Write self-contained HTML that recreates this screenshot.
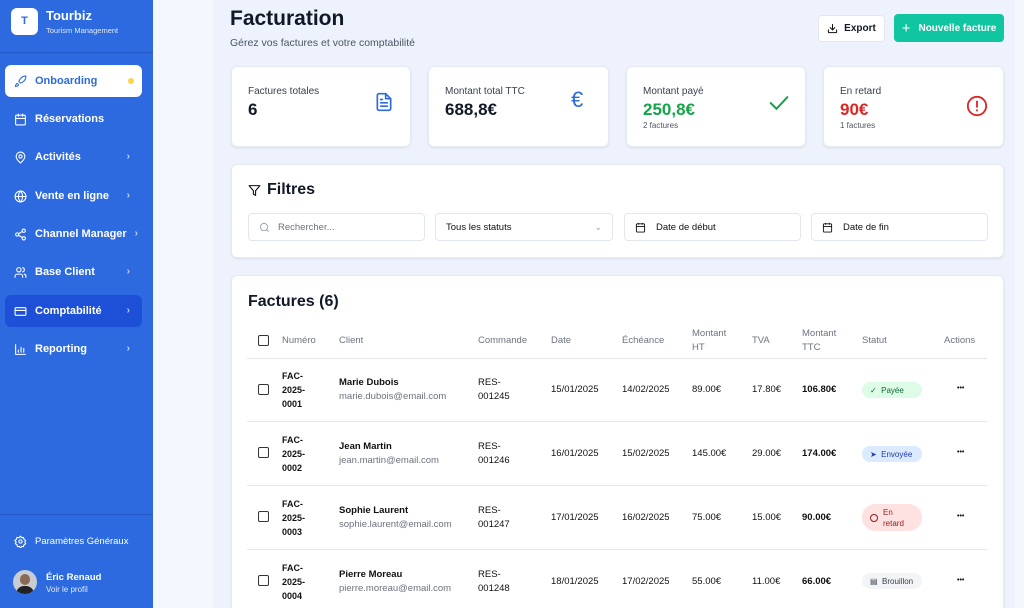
<!DOCTYPE html>
<html><head><meta charset="utf-8"><style>
*{box-sizing:border-box;margin:0;padding:0}
html,body{width:1024px;height:608px;overflow:hidden}
body{font-family:"Liberation Sans",sans-serif;background:#edf2fd;position:relative;color:#111827}
.sb{position:absolute;left:0;top:0;width:153px;height:608px;background:#2d6ae0;color:#fff}
.gap{position:absolute;left:153px;top:0;width:60px;height:608px;background:#f4f7fd}
.logo{position:absolute;left:11px;top:8px;width:27px;height:27px;background:#fff;border-radius:6px;color:#2d6ae0;font-weight:bold;font-size:11px;text-align:center;line-height:27px}
.nav{position:absolute;left:5px;width:137px;height:32px;border-radius:6px;font-size:11px;font-weight:bold;display:flex;align-items:center;padding-left:9px}
.nav svg{width:13px;height:13px;margin-right:8px;fill:none;stroke:#fff;stroke-width:2;stroke-linecap:round;stroke-linejoin:round}
.chev{position:absolute;right:12px;top:10px;font-size:10px;opacity:.7}
.card{position:absolute;background:#fff;border-radius:6px;box-shadow:0 1px 2px rgba(0,0,0,.08);border:1px solid #e5eaf3}
.kl{position:absolute;left:16px;top:19px;font-size:10px;color:#374151}
.kv{position:absolute;left:16px;top:33px;font-size:17px;font-weight:bold}
.ks{position:absolute;left:16px;top:54px;font-size:8px;color:#4b5563}
.inp{position:absolute;top:48px;height:28px;border:1px solid #e2e6ed;border-radius:4px;font-size:9.5px;display:flex;align-items:center;padding-left:10px;color:#111}
.th{position:absolute;font-size:9.5px;color:#6b7280;line-height:14px}
.td{position:absolute;font-size:9.5px;line-height:14px;color:#111}
.cb{position:absolute;left:258px;width:11px;height:11px;border:1.3px solid #333;border-radius:2px}
.hl{position:absolute;left:247px;width:740px;height:1px;background:#e5e7eb}
.badge{position:absolute;left:862px;width:60px;height:16px;border-radius:8px;font-size:8px;display:flex;align-items:center;padding-left:8px}
.dots{position:absolute;left:957px;font-size:7px;font-weight:bold;letter-spacing:0}
</style></head><body>
<div class="sb">
<div class="logo">T</div>
<div style="position:absolute;left:46px;top:8px;font-size:13px;font-weight:bold">Tourbiz</div>
<div style="position:absolute;left:46px;top:26px;font-size:7.5px;opacity:.85">Tourism Management</div>
<div style="position:absolute;left:0;top:52px;width:153px;height:1px;background:#2458c7"></div>
<div class="nav" style="top:65px;background:#fff;color:#2d6ae0"><svg viewBox="0 0 24 24" style="stroke:#2d6ae0"><path d="M4.5 16.5c-1.5 1.3-2 5-2 5s3.7-.5 5-2c.7-.8.7-2.1-.1-2.9a2.2 2.2 0 0 0-2.9-.1zM12 15l-3-3a22 22 0 0 1 2-3.9A12.9 12.9 0 0 1 22 2c0 2.7-.8 7.5-6 11a22.4 22.4 0 0 1-4 2z"/></svg>Onboarding<span style="position:absolute;right:8px;top:13px;width:6px;height:6px;border-radius:3px;background:#fcd34d"></span></div>
<div class="nav" style="top:103px"><svg viewBox="0 0 24 24"><rect x="3" y="4" width="18" height="18" rx="2"/><path d="M16 2v4M8 2v4M3 10h18"/></svg>Réservations</div>
<div class="nav" style="top:141px"><svg viewBox="0 0 24 24"><path d="M20 10c0 6-8 12-8 12s-8-6-8-12a8 8 0 0 1 16 0z"/><circle cx="12" cy="10" r="3"/></svg>Activités<span class="chev">›</span></div>
<div class="nav" style="top:180px"><svg viewBox="0 0 24 24"><circle cx="12" cy="12" r="10"/><path d="M2 12h20M12 2a15 15 0 0 1 0 20M12 2a15 15 0 0 0 0 20"/></svg>Vente en ligne<span class="chev">›</span></div>
<div class="nav" style="top:218px"><svg viewBox="0 0 24 24"><circle cx="18" cy="5" r="3"/><circle cx="6" cy="12" r="3"/><circle cx="18" cy="19" r="3"/><path d="M8.6 13.5l6.8 4M15.4 6.5l-6.8 4"/></svg>Channel Manager<span class="chev" style="right:4px">›</span></div>
<div class="nav" style="top:256px"><svg viewBox="0 0 24 24"><path d="M16 21v-2a4 4 0 0 0-4-4H6a4 4 0 0 0-4 4v2"/><circle cx="9" cy="7" r="4"/><path d="M22 21v-2a4 4 0 0 0-3-3.9M16 3.1a4 4 0 0 1 0 7.8"/></svg>Base Client<span class="chev">›</span></div>
<div class="nav" style="top:295px;background:#1d4fd7"><svg viewBox="0 0 24 24"><rect x="2" y="5" width="20" height="14" rx="2"/><path d="M2 10h20"/></svg>Comptabilité<span class="chev">›</span></div>
<div class="nav" style="top:333px"><svg viewBox="0 0 24 24"><path d="M3 3v18h18M8 17v-4M13 17V8M18 17v-7"/></svg>Reporting<span class="chev">›</span></div>
<div style="position:absolute;left:0;top:514px;width:153px;height:1px;background:#2458c7"></div>
<div class="nav" style="top:525px;font-size:9.5px;font-weight:normal"><svg viewBox="0 0 24 24"><circle cx="12" cy="12" r="3"/><path d="M12 2l2 3 3.5-.5 1 3.5 3 2-1.5 3 1.5 3-3 2-1 3.5-3.5-.5-2 3-2-3-3.5.5-1-3.5-3-2 1.5-3L1.5 10l3-2 1-3.5L9 5z"/></svg>Paramètres Généraux</div>
<div style="position:absolute;left:13px;top:570px;width:24px;height:24px;border-radius:12px;background:#c9ccd3;overflow:hidden"><div style="position:absolute;left:7px;top:4px;width:10px;height:11px;border-radius:5px;background:#8a6a56"></div><div style="position:absolute;left:3px;top:16px;width:18px;height:10px;border-radius:8px 8px 0 0;background:#222"></div></div>
<div style="position:absolute;left:46px;top:572px;font-size:9.5px;font-weight:bold">Éric Renaud</div>
<div style="position:absolute;left:46px;top:585px;font-size:8px;opacity:.85">Voir le profil</div>
</div>
<div class="gap"></div>
<div style="position:absolute;left:1015px;top:0;width:9px;height:608px;background:#f4f7fd"></div>

<div style="position:absolute;left:230px;top:7px;font-size:21px;font-weight:bold">Facturation</div>
<div style="position:absolute;left:230px;top:37px;font-size:10.5px;color:#4b5563">Gérez vos factures et votre comptabilité</div>
<div style="position:absolute;left:818px;top:15px;width:67px;height:27px;background:#fff;border:1px solid #e5e7eb;border-radius:4px;font-size:10px;font-weight:bold;display:flex;align-items:center;justify-content:center"><svg width="11" height="11" viewBox="0 0 24 24" fill="none" stroke="#111" stroke-width="2.2" stroke-linecap="round" style="margin-right:6px"><path d="M21 15v4a2 2 0 0 1-2 2H5a2 2 0 0 1-2-2v-4M7 10l5 5 5-5M12 15V3"/></svg>Export</div>
<div style="position:absolute;left:894px;top:14px;width:110px;height:28px;background:#0fc6a0;border-radius:4px;font-size:10px;font-weight:bold;color:#fff;display:flex;align-items:center;justify-content:center"><span style="font-size:15px;font-weight:normal;margin-right:8px">+</span>Nouvelle facture</div>

<div class="card" style="left:231px;top:66px;width:180px;height:81px"><div class="kl">Factures totales</div><div class="kv">6</div>
<svg style="position:absolute;left:142px;top:24px" width="20" height="22" viewBox="0 0 24 24" fill="none" stroke="#2d6ae0" stroke-width="2" stroke-linejoin="round" stroke-linecap="round"><path d="M14 2H6a2 2 0 0 0-2 2v16a2 2 0 0 0 2 2h12a2 2 0 0 0 2-2V8z"/><path d="M14 2v6h6M16 13H8M16 17H8M10 9H8"/></svg></div>
<div class="card" style="left:428px;top:66px;width:181px;height:81px"><div class="kl">Montant total TTC</div><div class="kv">688,8€</div><div style="position:absolute;left:142px;top:20px;font-size:22px;color:#2d6ae0">€</div></div>
<div class="card" style="left:626px;top:66px;width:180px;height:81px"><div class="kl">Montant payé</div><div class="kv" style="color:#16a34a">250,8€</div><div class="ks">2 factures</div>
<svg style="position:absolute;left:142px;top:28px" width="20" height="16" viewBox="0 0 24 18" fill="none" stroke="#16a34a" stroke-width="2.4" stroke-linecap="round"><path d="M2 9l7 7L22 2"/></svg></div>
<div class="card" style="left:823px;top:66px;width:181px;height:81px"><div class="kl">En retard</div><div class="kv" style="color:#dc2626">90€</div><div class="ks">1 factures</div>
<svg style="position:absolute;left:142px;top:28px" width="22" height="22" viewBox="0 0 24 24" fill="none" stroke="#dc2626" stroke-width="2" stroke-linecap="round"><circle cx="12" cy="12" r="10"/><path d="M12 7v6M12 16.5v.5"/></svg></div>

<div class="card" style="left:231px;top:164px;width:773px;height:94px">
<svg style="position:absolute;left:16px;top:19px" width="13" height="13" viewBox="0 0 24 24" fill="none" stroke="#111" stroke-width="2" stroke-linejoin="round"><path d="M22 3H2l8 9.5V19l4 2v-8.5z"/></svg>
<div style="position:absolute;left:35px;top:16px;font-size:16px;font-weight:bold">Filtres</div>
<div class="inp" style="left:16px;width:177px;color:#6b7280"><svg width="11" height="11" viewBox="0 0 24 24" fill="none" stroke="#9ca3af" stroke-width="2" style="margin-right:8px"><circle cx="11" cy="11" r="8"/><path d="M21 21l-4.3-4.3"/></svg>Rechercher...</div>
<div class="inp" style="left:203px;width:178px">Tous les statuts<span style="position:absolute;right:10px;color:#9ca3af;font-size:9px">⌄</span></div>
<div class="inp" style="left:392px;width:177px"><svg width="11" height="11" viewBox="0 0 24 24" fill="none" stroke="#111" stroke-width="2" style="margin-right:10px"><rect x="3" y="4" width="18" height="18" rx="2"/><path d="M16 2v4M8 2v4M3 10h18"/></svg>Date de début</div>
<div class="inp" style="left:579px;width:177px"><svg width="11" height="11" viewBox="0 0 24 24" fill="none" stroke="#111" stroke-width="2" style="margin-right:10px"><rect x="3" y="4" width="18" height="18" rx="2"/><path d="M16 2v4M8 2v4M3 10h18"/></svg>Date de fin</div>
</div>

<div class="card" style="left:231px;top:275px;width:773px;height:340px"><div style="position:absolute;left:16px;top:17px;font-size:16px;font-weight:bold">Factures (6)</div></div>

<div class="cb" style="top:335px"></div>
<div class="th" style="left:282px;top:334px">Numéro</div>
<div class="th" style="left:339px;top:334px">Client</div>
<div class="th" style="left:478px;top:334px">Commande</div>
<div class="th" style="left:551px;top:334px">Date</div>
<div class="th" style="left:622px;top:334px">Échéance</div>
<div class="th" style="left:692px;top:327px">Montant<br>HT</div>
<div class="th" style="left:752px;top:334px">TVA</div>
<div class="th" style="left:802px;top:327px">Montant<br>TTC</div>
<div class="th" style="left:862px;top:334px">Statut</div>
<div class="th" style="left:944px;top:334px">Actions</div>
<div class="hl" style="top:358px"></div>
<div class="hl" style="top:421px"></div>
<div class="hl" style="top:485px"></div>
<div class="hl" style="top:549px"></div>

<div class="cb" style="top:384px"></div>
<div class="td" style="left:282px;top:369px;font-weight:bold;font-size:9px">FAC-<br>2025-<br>0001</div>
<div class="td" style="left:339px;top:376px;font-weight:bold">Marie Dubois</div>
<div class="td" style="left:339px;top:390px;color:#6b7280">marie.dubois@email.com</div>
<div class="td" style="left:478px;top:376px">RES-<br>001245</div>
<div class="td" style="left:551px;top:383px">15/01/2025</div>
<div class="td" style="left:622px;top:383px">14/02/2025</div>
<div class="td" style="left:692px;top:383px">89.00€</div>
<div class="td" style="left:752px;top:383px">17.80€</div>
<div class="td" style="left:802px;top:383px;font-weight:bold">106.80€</div>
<div class="badge" style="top:382px;background:#dcfce7;color:#166534">✓&nbsp; Payée</div>
<div class="dots" style="top:385px">•••</div>

<div class="cb" style="top:447px"></div>
<div class="td" style="left:282px;top:433px;font-weight:bold;font-size:9px">FAC-<br>2025-<br>0002</div>
<div class="td" style="left:339px;top:440px;font-weight:bold">Jean Martin</div>
<div class="td" style="left:339px;top:454px;color:#6b7280">jean.martin@email.com</div>
<div class="td" style="left:478px;top:440px">RES-<br>001246</div>
<div class="td" style="left:551px;top:447px">16/01/2025</div>
<div class="td" style="left:622px;top:447px">15/02/2025</div>
<div class="td" style="left:692px;top:447px">145.00€</div>
<div class="td" style="left:752px;top:447px">29.00€</div>
<div class="td" style="left:802px;top:447px;font-weight:bold">174.00€</div>
<div class="badge" style="top:446px;background:#dbeafe;color:#1e40af">➤&nbsp; Envoyée</div>
<div class="dots" style="top:449px">•••</div>

<div class="cb" style="top:511px"></div>
<div class="td" style="left:282px;top:497px;font-weight:bold;font-size:9px">FAC-<br>2025-<br>0003</div>
<div class="td" style="left:339px;top:504px;font-weight:bold">Sophie Laurent</div>
<div class="td" style="left:339px;top:518px;color:#6b7280">sophie.laurent@email.com</div>
<div class="td" style="left:478px;top:504px">RES-<br>001247</div>
<div class="td" style="left:551px;top:511px">17/01/2025</div>
<div class="td" style="left:622px;top:511px">16/02/2025</div>
<div class="td" style="left:692px;top:511px">75.00€</div>
<div class="td" style="left:752px;top:511px">15.00€</div>
<div class="td" style="left:802px;top:511px;font-weight:bold">90.00€</div>
<div class="badge" style="top:504px;height:27px;border-radius:13px;background:#fee2e2;color:#991b1b;line-height:11px"><span style="display:inline-block;width:8px;height:8px;border:1px solid #991b1b;border-radius:50%;margin-right:5px"></span>En<br>retard</div>
<div class="dots" style="top:513px">•••</div>

<div class="cb" style="top:575px"></div>
<div class="td" style="left:282px;top:561px;font-weight:bold;font-size:9px">FAC-<br>2025-<br>0004</div>
<div class="td" style="left:339px;top:568px;font-weight:bold">Pierre Moreau</div>
<div class="td" style="left:339px;top:582px;color:#6b7280">pierre.moreau@email.com</div>
<div class="td" style="left:478px;top:568px">RES-<br>001248</div>
<div class="td" style="left:551px;top:575px">18/01/2025</div>
<div class="td" style="left:622px;top:575px">17/02/2025</div>
<div class="td" style="left:692px;top:575px">55.00€</div>
<div class="td" style="left:752px;top:575px">11.00€</div>
<div class="td" style="left:802px;top:575px;font-weight:bold">66.00€</div>
<div class="badge" style="top:573px;background:#f3f4f6;color:#374151">▤&nbsp; Brouillon</div>
<div class="dots" style="top:577px">•••</div>
</body></html>
